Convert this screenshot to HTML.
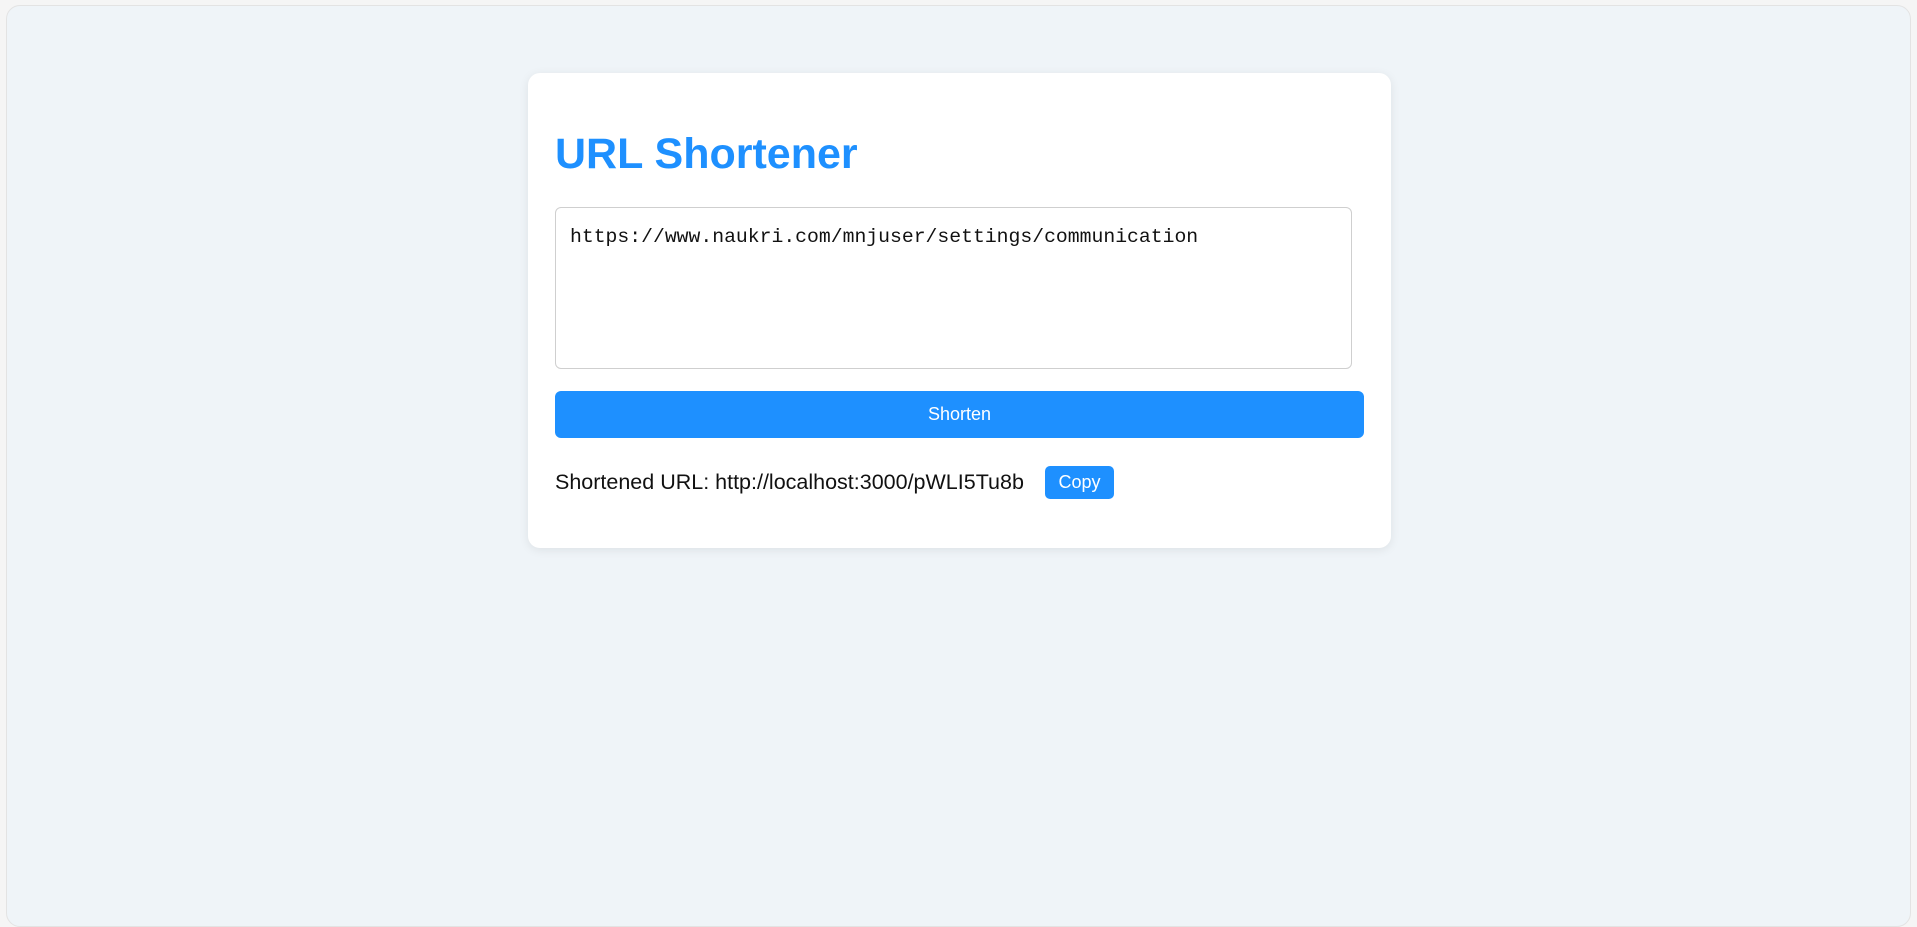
<!DOCTYPE html>
<html><head><meta charset="utf-8"><style>
html,body{margin:0;padding:0;width:1917px;height:899px;overflow:hidden;background:#f5f5f5;font-family:"Liberation Sans",Arial,sans-serif}
.outer{position:absolute;left:6px;top:5px;width:1903px;height:920px;background:#eff4f8;border:1px solid #e3e3e3;border-radius:14px}
.card{position:absolute;left:528px;top:73px;width:863px;height:475px;background:#fff;border-radius:12px;box-shadow:0 2px 10px rgba(0,0,0,0.08)}
h1{position:absolute;left:27px;top:56px;margin:0;font-size:43px;font-weight:bold;color:#1e90ff;line-height:1.2}
.ta{position:absolute;left:27px;top:134px;border:1px solid #cfcfcf;border-radius:6px;box-sizing:border-box;width:797px;height:162px}
.ta span{position:absolute;left:14px;top:17px;font-family:"Liberation Mono","DejaVu Sans Mono",monospace;font-size:19.75px;color:#111;line-height:24px}
.btn{position:absolute;left:27px;top:318px;width:809px;height:47px;background:#1e90ff;border-radius:6px;color:#fff;font-size:18px;text-align:center;line-height:47px}
.res{position:absolute;left:27px;top:393px;height:33px;line-height:33px;font-size:21.5px;color:#111;white-space:nowrap}
.copy{position:absolute;left:517px;top:393px;width:69px;height:33px;background:#1e90ff;border-radius:5px;color:#fff;font-size:18px;text-align:center;line-height:33px}
</style></head><body>
<div class="outer"></div>
<div class="card">
<h1>URL Shortener</h1>
<div class="ta"><span>https://www.naukri.com/mnjuser/settings/communication</span></div>
<div class="btn">Shorten</div>
<div class="res">Shortened URL: http://localhost:3000/pWLI5Tu8b</div>
<div class="copy">Copy</div>
</div>
</body></html>
